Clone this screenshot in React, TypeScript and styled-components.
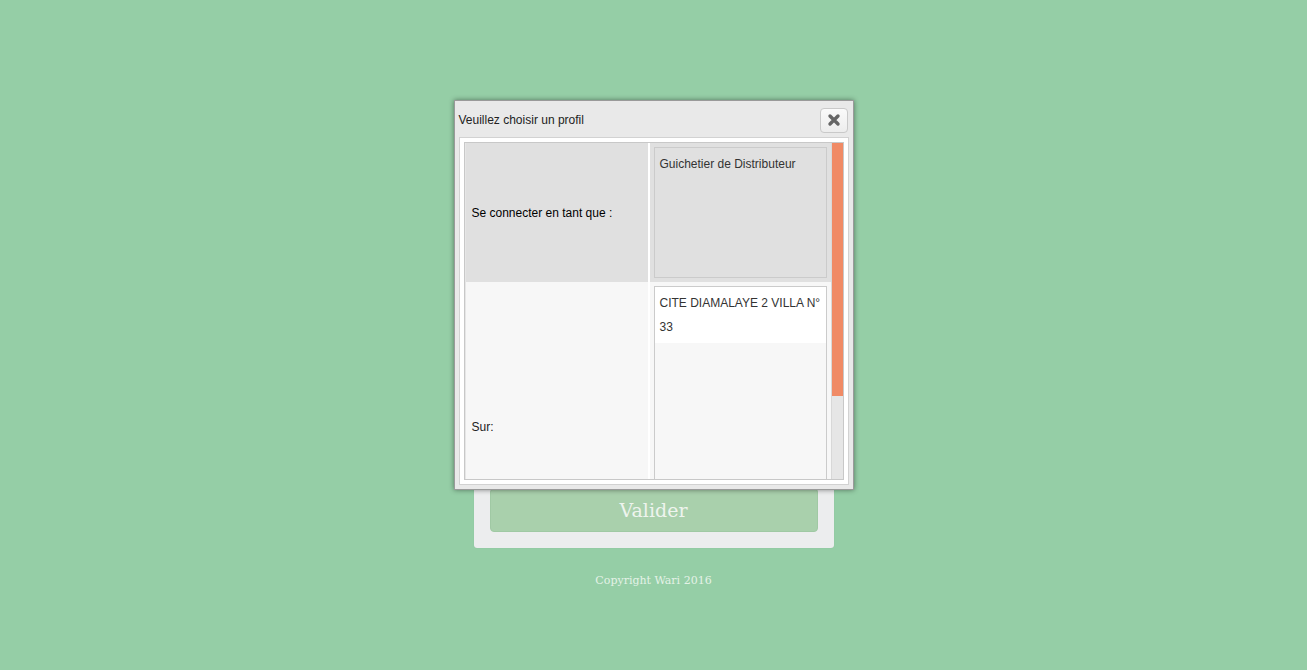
import React from "react";
import styled, { createGlobalStyle } from "styled-components";

const Global = createGlobalStyle`
  html, body { margin: 0; padding: 0; }
  body {
    background: #95cea6;
    min-height: 100vh;
    font-family: "DejaVu Serif", serif;
  }
  #root { min-height: 100vh; }
`;

const Page = styled.div`
  position: relative;
  min-height: 670px;
  display: flex;
  flex-direction: column;
  align-items: center;
  padding-top: 472px;
  box-sizing: border-box;
`;

const LoginCard = styled.div`
  width: 360px;
  box-sizing: border-box;
  padding: 16px;
  background: #ecedee;
  border-radius: 3px;
  box-shadow: 0 0 1px rgba(0, 0, 0, 0.15);
`;

const SubmitButton = styled.button`
  display: block;
  width: 100%;
  height: 44px;
  border: 1px solid #a0c9a4;
  border-radius: 4px;
  background: #a9d0ac;
  color: #eef4ee;
  font-family: "DejaVu Serif", serif;
  font-size: 19px;
  cursor: pointer;
`;

const Copyright = styled.div`
  margin-top: 26px;
  font-family: "DejaVu Serif", serif;
  font-size: 11px;
  color: #e4f2e6;
`;

const Dialog = styled.div`
  position: absolute;
  top: 100px;
  left: 50%;
  transform: translateX(-50%);
  width: 400px;
  height: 390px;
  box-sizing: border-box;
  background: #e9e9e9;
  border: 1px solid #9a9a9a;
  box-shadow: 0 0 5px rgba(0, 0, 0, 0.45);
  padding: 0 4px 4px 4px;
  display: flex;
  flex-direction: column;
  font-family: "Liberation Sans", Arial, sans-serif;
`;

const TitleBar = styled.div`
  flex: 0 0 36px;
  height: 36px;
  display: flex;
  align-items: center;
  justify-content: space-between;
  padding-top: 2px;
  box-sizing: border-box;
`;

const Title = styled.span`
  font-size: 12px;
  color: #222;
`;

const CloseButton = styled.button`
  width: 28px;
  height: 25px;
  margin-right: 1px;
  padding: 0;
  display: flex;
  align-items: center;
  justify-content: center;
  border: 1px solid #c9c9c9;
  border-radius: 4px;
  background: linear-gradient(#fafafa, #ededed);
  cursor: pointer;
`;

const Frame = styled.div`
  flex: 1 1 auto;
  min-height: 0;
  box-sizing: border-box;
  background: #fff;
  border: 1px solid #d2d2d2;
  padding: 4px;
  display: flex;
`;

const ScrollBox = styled.div`
  flex: 1 1 auto;
  min-height: 0;
  border: 1px solid #c8c8c8;
  display: flex;
  background: #fff;
`;

const Viewport = styled.div`
  flex: 1 1 auto;
  min-width: 0;
  overflow: hidden;
`;

const ScrollTrack = styled.div`
  flex: 0 0 11px;
  background: #e6e6e6;
  border-left: 1px solid #d8d8d8;
  display: flex;
  flex-direction: column;
`;

const ScrollThumb = styled.div`
  height: 253px;
  background: #f08a65;
`;

const FormGrid = styled.div`
  display: grid;
  grid-template-columns: 183px 1fr;
  column-gap: 2px;
  background: #fff;
`;

const LabelCell = styled.div<{ $shade: string; $h: number }>`
  background: ${(p) => p.$shade};
  height: ${(p) => p.$h}px;
  display: flex;
  align-items: center;
  padding-left: 6px;
  font-size: 12px;
  color: ${(p) => (p.$shade === "#e0e0e0" ? "#000" : "#222")};
  border-left: 1px solid #e6e6e6;
`;

const FieldCell = styled.div<{ $shade: string }>`
  background: ${(p) => p.$shade};
  padding: 4px;
  box-sizing: border-box;
`;

const ListBox = styled.div<{ $h: number; $bg: string }>`
  height: ${(p) => p.$h}px;
  box-sizing: border-box;
  border: 1px solid #cbcbcb;
  background: ${(p) => p.$bg};
  overflow: hidden;
`;

const Option = styled.div<{ $bg: string }>`
  background: ${(p) => p.$bg};
  padding: 4px 5px;
  font-size: 12px;
  line-height: 24px;
  color: #333;
`;

const CloseIcon = () => (
  <svg width="14" height="14" viewBox="0 0 14 14">
    <path
      d="M3 3 L11 11 M11 3 L3 11"
      stroke="#666"
      strokeWidth="3.4"
      strokeLinecap="round"
    />
  </svg>
);

export default function App() {
  return (
    <>
      <Global />
      <Page>
        <LoginCard>
          <SubmitButton>Valider</SubmitButton>
        </LoginCard>
        <Copyright>Copyright Wari 2016</Copyright>

        <Dialog role="dialog">
          <TitleBar>
            <Title>Veuillez choisir un profil</Title>
            <CloseButton aria-label="Fermer">
              <CloseIcon />
            </CloseButton>
          </TitleBar>
          <Frame>
            <ScrollBox>
              <Viewport>
                <FormGrid>
                  <LabelCell $shade="#e0e0e0" $h={139}>
                    Se connecter en tant que :
                  </LabelCell>
                  <FieldCell $shade="#e0e0e0">
                    <ListBox $h={131} $bg="#e0e0e0">
                      <Option $bg="#e0e0e0">Guichetier de Distributeur</Option>
                    </ListBox>
                  </FieldCell>
                  <LabelCell $shade="#f7f7f7" $h={290}>
                    Sur:
                  </LabelCell>
                  <FieldCell $shade="#f7f7f7">
                    <ListBox $h={282} $bg="#f7f7f7">
                      <Option $bg="#ffffff">CITE DIAMALAYE 2 VILLA N° 33</Option>
                    </ListBox>
                  </FieldCell>
                </FormGrid>
              </Viewport>
              <ScrollTrack>
                <ScrollThumb />
              </ScrollTrack>
            </ScrollBox>
          </Frame>
        </Dialog>
      </Page>
    </>
  );
}
